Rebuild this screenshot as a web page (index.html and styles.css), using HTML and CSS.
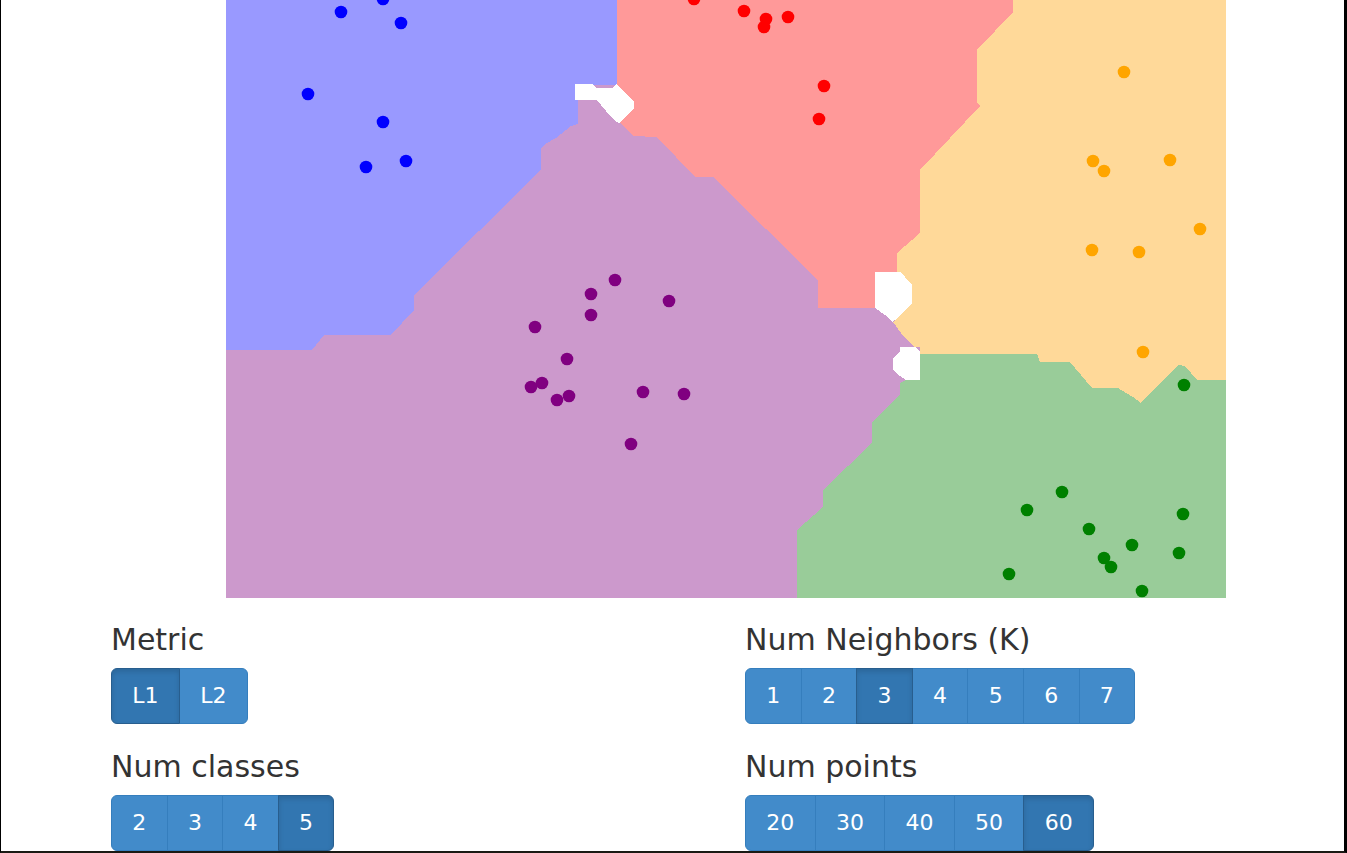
FILE: index.html
```html
<!DOCTYPE html>
<html>
<head>
<meta charset="utf-8">
<title>kNN demo</title>
<link rel="stylesheet" href="styles.css">
</head>
<body>
<div class="frame">
  <div class="canvas-wrap">
    <svg class="plot" width="1000" height="598" viewBox="226 0 1000 598" xmlns="http://www.w3.org/2000/svg" shape-rendering="crispEdges">
      <rect x="226" y="0" width="1000" height="598" fill="#cc99cc"/>
      <polygon fill="#9999ff" points="226,0 617,0 617,85 575,85 575,99 578,99 578,124 571,126 566,130 556,138 545,144 541,148 541,170 414,295 414,310 391,335 324,335 312,350 226,350"/>
      <polygon fill="#ff9999" points="617,0 1013,0 1013,12 977,50 977,103 980,106 920,170 920,233 897,253 897,272 875,272 875,308 818,308 818,280 713,177 695,177 657,137 633,136 620,122 634,108 634,103 622,90 617,85"/>
      <polygon fill="#ffd999" points="1013,0 1226,0 1226,380 1197,380 1185,366 1178,365 1141,403 1133,397 1118,388 1092,388 1070,362 1040,362 1037,354 920,354 920,347 915,347 904,337 893,322 912,303 912,285 900,272 897,272 897,253 920,233 920,170 980,106 977,103 977,50 1013,12"/>
      <polygon fill="#99cc99" points="920,354 1037,354 1040,362 1070,362 1092,388 1118,388 1133,397 1141,403 1178,365 1185,366 1197,380 1226,380 1226,598 797,598 797,530 823,507 823,490 872,443 872,422 900,395 900,383 906,380 920,380"/>
      <polygon fill="#ffffff" points="575,84 593,84 596,88 612,88 616,84 622,90 634,102 634,108 626,116 619,123 615,121 606,111 597,100 575,100"/>
      <polygon fill="#ffffff" points="875,272 900,272 905,277 912,285 912,303 905,310 895,320 892,322 885,315 875,308"/>
      <polygon fill="#ffffff" points="900,347 915,347 920,352 920,380 906,380 900,376 893,370 893,358 900,352"/>
      <g shape-rendering="auto">
        <g fill="#0000ff">
          <circle cx="341" cy="12" r="6.3"/><circle cx="383" cy="-1" r="6.3"/><circle cx="401" cy="23" r="6.3"/>
          <circle cx="308" cy="94" r="6.3"/><circle cx="383" cy="122" r="6.3"/><circle cx="366" cy="167" r="6.3"/>
          <circle cx="406" cy="161" r="6.3"/>
        </g>
        <g fill="#ff0000">
          <circle cx="694" cy="-1" r="6.3"/><circle cx="744" cy="11" r="6.3"/><circle cx="766" cy="19" r="6.3"/>
          <circle cx="764" cy="27" r="6.3"/><circle cx="788" cy="17" r="6.3"/><circle cx="824" cy="86" r="6.3"/>
          <circle cx="819" cy="119" r="6.3"/>
        </g>
        <g fill="#800080">
          <circle cx="615" cy="280" r="6.3"/><circle cx="591" cy="294" r="6.3"/><circle cx="669" cy="301" r="6.3"/>
          <circle cx="591" cy="315" r="6.3"/><circle cx="535" cy="327" r="6.3"/><circle cx="567" cy="359" r="6.3"/>
          <circle cx="531" cy="387" r="6.3"/><circle cx="542" cy="383" r="6.3"/><circle cx="557" cy="400" r="6.3"/>
          <circle cx="569" cy="396" r="6.3"/><circle cx="643" cy="392" r="6.3"/><circle cx="684" cy="394" r="6.3"/>
          <circle cx="631" cy="444" r="6.3"/>
        </g>
        <g fill="#ffa500">
          <circle cx="1124" cy="72" r="6.3"/><circle cx="1093" cy="161" r="6.3"/><circle cx="1104" cy="171" r="6.3"/>
          <circle cx="1170" cy="160" r="6.3"/><circle cx="1200" cy="229" r="6.3"/><circle cx="1092" cy="250" r="6.3"/>
          <circle cx="1139" cy="252" r="6.3"/><circle cx="1143" cy="352" r="6.3"/>
        </g>
        <g fill="#008000">
          <circle cx="1184" cy="385" r="6.3"/><circle cx="1062" cy="492" r="6.3"/><circle cx="1027" cy="510" r="6.3"/>
          <circle cx="1089" cy="529" r="6.3"/><circle cx="1132" cy="545" r="6.3"/><circle cx="1104" cy="558" r="6.3"/>
          <circle cx="1111" cy="567" r="6.3"/><circle cx="1183" cy="514" r="6.3"/><circle cx="1179" cy="553" r="6.3"/>
          <circle cx="1009" cy="574" r="6.3"/><circle cx="1142" cy="591" r="6.3"/>
        </g>
      </g>
    </svg>
  </div>
  <div class="controls">
    <div class="col">
      <div class="label">Metric</div>
      <div class="btn-group">
        <button class="btn active">L1</button><button class="btn">L2</button>
      </div>
      <div class="label second">Num classes</div>
      <div class="btn-group">
        <button class="btn">2</button><button class="btn">3</button><button class="btn">4</button><button class="btn active">5</button>
      </div>
    </div>
    <div class="col">
      <div class="label">Num Neighbors (K)</div>
      <div class="btn-group">
        <button class="btn">1</button><button class="btn">2</button><button class="btn active">3</button><button class="btn">4</button><button class="btn">5</button><button class="btn">6</button><button class="btn">7</button>
      </div>
      <div class="label second">Num points</div>
      <div class="btn-group">
        <button class="btn">20</button><button class="btn">30</button><button class="btn">40</button><button class="btn">50</button><button class="btn active">60</button>
      </div>
    </div>
  </div>
</div>
</body>
</html>
```

FILE: styles.css
```css
html, body {
  margin: 0;
  padding: 0;
  background: #ffffff;
}

.frame {
  width: 1347px;
  height: 853px;
  box-sizing: border-box;
  border-left: 1px solid #000;
  border-right: 3px solid #000;
  border-bottom: 2px solid #1a1a14;
  overflow: hidden;
  font-family: "DejaVu Sans", sans-serif;
  color: #333333;
}

.canvas-wrap {
  padding-left: 225px;
  height: 598px;
}

.plot {
  display: block;
}

.controls {
  display: grid;
  grid-template-columns: 634px 634px;
  padding-left: 110px;
  padding-top: 25px;
}

.col {
  display: flex;
  flex-direction: column;
  align-items: flex-start;
}

.label {
  font-size: 30px;
  line-height: 33px;
  margin-bottom: 12px;
}

.label.second {
  margin-top: 26px;
}

.btn-group {
  display: flex;
}

.btn {
  font-family: "DejaVu Sans", sans-serif;
  font-size: 22px;
  line-height: 30px;
  padding: 12px 20.3px;
  color: #ffffff;
  background: #428bca;
  border: 1px solid #357ebd;
  border-radius: 0;
  margin: 0;
  cursor: pointer;
}

.btn + .btn {
  margin-left: -1px;
}

.btn:first-child {
  border-top-left-radius: 6px;
  border-bottom-left-radius: 6px;
}

.btn:last-child {
  border-top-right-radius: 6px;
  border-bottom-right-radius: 6px;
}

.btn.active {
  background: #3276b1;
  border-color: #285e8e;
  box-shadow: inset 0 3px 5px rgba(0, 0, 0, 0.125);
  position: relative;
}
```
